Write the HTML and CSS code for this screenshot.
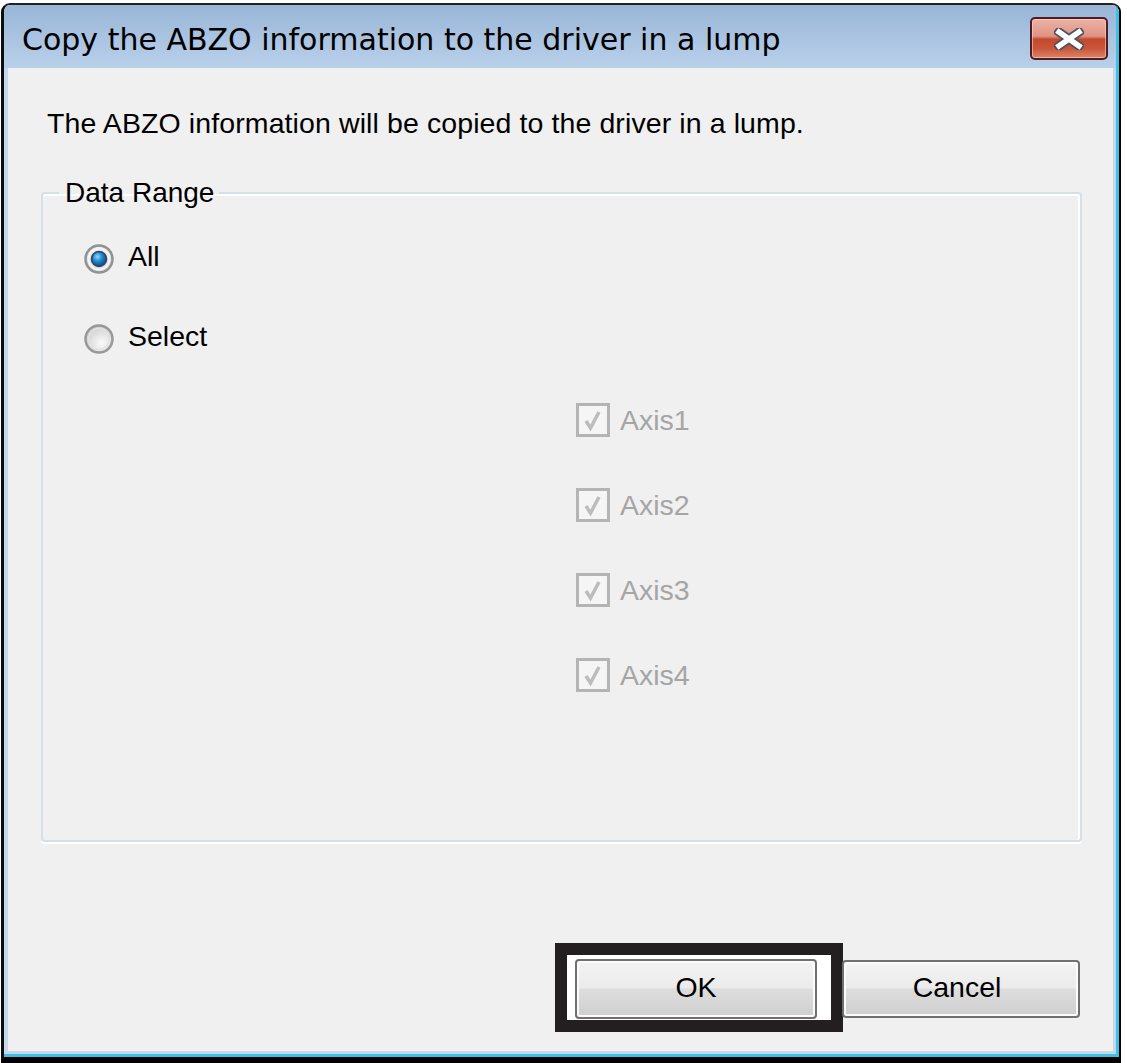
FILE: index.html
```html
<!DOCTYPE html>
<html lang="en">
<head>
<meta charset="utf-8">
<title>Copy the ABZO information to the driver in a lump</title>
<link rel="stylesheet" href="styles.css">
</head>
<body>
<div class="window">
  <div class="frame">
    <div class="titlebar">
      <div class="title">Copy the ABZO information to the driver in a lump</div>
      <button class="close" aria-label="Close">
        <svg viewBox="0 0 30 22" width="30" height="22" aria-hidden="true">
          <path d="M5 4 L25 18 M25 4 L5 18" stroke="#4a5264" stroke-width="9" stroke-linecap="square" fill="none"/>
          <path d="M5 4 L25 18 M25 4 L5 18" stroke="#ffffff" stroke-width="5.5" stroke-linecap="square" fill="none"/>
        </svg>
      </button>
    </div>
    <div class="client">
      <p class="message">The ABZO information will be copied to the driver in a lump.</p>
      <fieldset class="group">
        <legend class="group-title">Data Range</legend>
        <div class="radio-row first">
          <span class="radio">
            <svg viewBox="0 0 30 30" width="30" height="30" aria-hidden="true">
              <defs>
                <radialGradient id="rg1" cx="50%" cy="40%" r="60%"><stop offset="0" stop-color="#ffffff"/><stop offset="1" stop-color="#d2d2d2"/></radialGradient>
                <radialGradient id="dot" cx="40%" cy="35%" r="65%"><stop offset="0" stop-color="#8fd8ff"/><stop offset="0.45" stop-color="#2a8ad0"/><stop offset="1" stop-color="#0a4a80"/></radialGradient>
              </defs>
              <circle cx="15" cy="15" r="13.5" fill="url(#rg1)" stroke="#929292" stroke-width="2.5"/>
              <circle cx="15" cy="15" r="10.5" fill="none" stroke="#f4f4f4" stroke-width="2"/>
              <circle cx="15" cy="15" r="7.5" fill="url(#dot)" stroke="#27496d" stroke-width="1.6"/>
            </svg>
          </span>
          <span class="label">All</span>
        </div>
        <div class="radio-row second">
          <span class="radio">
            <svg viewBox="0 0 30 30" width="30" height="30" aria-hidden="true">
              <defs>
                <radialGradient id="rg2" cx="60%" cy="65%" r="65%"><stop offset="0" stop-color="#fbfbfb"/><stop offset="1" stop-color="#cfcfcf"/></radialGradient>
              </defs>
              <circle cx="15" cy="15" r="13.5" fill="url(#rg2)" stroke="#989898" stroke-width="2.5"/>
              <circle cx="15" cy="15" r="10.5" fill="none" stroke="#e2e2e2" stroke-width="1.5"/>
            </svg>
          </span>
          <span class="label">Select</span>
        </div>
        <div class="axes">
          <div class="check-row">
            <span class="check"><svg viewBox="0 0 34 34" width="34" height="34" aria-hidden="true"><rect x="1.5" y="1.5" width="31" height="31" fill="#f5f5f5" stroke="#b4b4b4" stroke-width="3"/><path d="M10 18 L14.5 25 L23 9" fill="none" stroke="#bcbcbc" stroke-width="3.5"/></svg></span>
            <span class="axis-label">Axis1</span>
          </div>
          <div class="check-row">
            <span class="check"><svg viewBox="0 0 34 34" width="34" height="34" aria-hidden="true"><rect x="1.5" y="1.5" width="31" height="31" fill="#f5f5f5" stroke="#b4b4b4" stroke-width="3"/><path d="M10 18 L14.5 25 L23 9" fill="none" stroke="#bcbcbc" stroke-width="3.5"/></svg></span>
            <span class="axis-label">Axis2</span>
          </div>
          <div class="check-row">
            <span class="check"><svg viewBox="0 0 34 34" width="34" height="34" aria-hidden="true"><rect x="1.5" y="1.5" width="31" height="31" fill="#f5f5f5" stroke="#b4b4b4" stroke-width="3"/><path d="M10 18 L14.5 25 L23 9" fill="none" stroke="#bcbcbc" stroke-width="3.5"/></svg></span>
            <span class="axis-label">Axis3</span>
          </div>
          <div class="check-row">
            <span class="check"><svg viewBox="0 0 34 34" width="34" height="34" aria-hidden="true"><rect x="1.5" y="1.5" width="31" height="31" fill="#f5f5f5" stroke="#b4b4b4" stroke-width="3"/><path d="M10 18 L14.5 25 L23 9" fill="none" stroke="#bcbcbc" stroke-width="3.5"/></svg></span>
            <span class="axis-label">Axis4</span>
          </div>
        </div>
      </fieldset>
      <div class="buttons">
        <div class="highlight">
          <button class="btn ok">OK</button>
        </div>
        <button class="btn cancel">Cancel</button>
      </div>
    </div>
  </div>
</div>
</body>
</html>
```
FILE: styles.css
```css
* { box-sizing: border-box; }

html, body {
  margin: 0;
  padding: 0;
  background: #ffffff;
}

body {
  font-family: "Liberation Sans", Arial, sans-serif;
  color: #000;
}

.window {
  margin: 3px 0 0 1px;
  width: 1120px;
  height: 1060px;
  border-left: 3px solid #0d0d0d;
  border-top: 2px solid #222222;
  border-right: 2px solid #000;
  border-bottom: 6px solid #000;
  border-top-left-radius: 9px;
  border-top-right-radius: 9px;
  overflow: hidden;
}

.frame {
  height: 100%;
  display: flex;
  flex-direction: column;
  border-right: 3px solid #3cc0e4;
  border-bottom: 3px solid #3cc0e4;
  background: linear-gradient(to bottom, #99b6d7 0px, #b9d0ea 63px, #c3d8ee 64px, #c3d8ee 100%);
}

.titlebar {
  height: 63px;
  flex: none;
  display: flex;
  align-items: flex-start;
  justify-content: space-between;
  padding: 0 8px 0 18px;
}

.title {
  margin-top: 17px;
  font-family: "DejaVu Sans", sans-serif;
  font-size: 30px;
  line-height: 36px;
  color: #000;
  white-space: nowrap;
}

.close {
  margin: 12px 0 0 0;
  width: 78px;
  height: 43px;
  padding: 0;
  border: 2px solid #4d1c25;
  border-radius: 5px;
  background: linear-gradient(to bottom, #ecb2a4 0%, #df9384 44%, #c4482c 52%, #c9553a 75%, #dc8466 100%);
  box-shadow: inset 0 0 0 1px rgba(255, 220, 210, 0.55);
  display: flex;
  align-items: center;
  justify-content: center;
}

.close svg { display: block; margin-top: 1px; }

.client {
  flex: 1;
  margin: 0 3px 3px 4px;
  background: #f0f0f0;
  display: flex;
  flex-direction: column;
}

.message {
  margin: 0;
  padding: 38px 0 0 39px;
  font-size: 28.5px;
  line-height: 34px;
  letter-spacing: 0.1px;
  white-space: nowrap;
}

.group {
  margin: 36px 31px 0 33px;
  padding: 0 0 145px 0;
  border: 2px solid #d5dfe5;
  border-radius: 4px;
  box-shadow: inset 0 2px 0 #ffffff, inset -2px 0 0 #ffffff, 0 2px 0 #ffffff;
  min-width: 0;
}

.group-title {
  margin-left: 16px;
  padding: 0 5px 0 6px;
  font-size: 28px;
  line-height: 34px;
}

.radio-row {
  height: 40px;
  display: flex;
  align-items: center;
  padding-left: 41px;
}

.radio-row.first { margin-top: 29px; }
.radio-row.second { margin-top: 40px; }

.radio {
  width: 30px;
  height: 30px;
  flex: none;
}

.radio svg, .check svg { display: block; }

.label {
  margin-left: 14px;
  margin-bottom: 6px;
  font-size: 28.5px;
  line-height: 34px;
}

.axes {
  margin-top: 41px;
  padding-left: 533px;
  display: flex;
  flex-direction: column;
  gap: 45px;
}

.check-row {
  height: 40px;
  display: flex;
  align-items: center;
}

.check {
  width: 34px;
  height: 34px;
  flex: none;
}

.axis-label {
  margin-left: 10px;
  font-size: 28.5px;
  line-height: 34px;
  color: #a5a5a5;
}

.buttons {
  margin-top: 101px;
  display: flex;
  justify-content: flex-end;
  align-items: flex-start;
  padding-right: 33px;
}

.highlight {
  width: 288px;
  height: 89px;
  border: 12px solid #231f20;
  background: #ffffff;
  padding: 4px 14px 1px 8px;
}

.btn {
  font-family: "Liberation Sans", Arial, sans-serif;
  font-size: 28.5px;
  color: #000;
  border: 2px solid #707070;
  border-radius: 4px;
  background: linear-gradient(to bottom, #f3f3f3 0%, #ebebeb 48%, #dddddd 50%, #cfcfcf 100%);
  box-shadow: inset 0 0 0 2px #fbfbfb;
  padding: 0 0 4px 0;
  display: flex;
  align-items: center;
  justify-content: center;
  line-height: 34px;
}

.ok {
  width: 242px;
  height: 60px;
}

.cancel {
  width: 238px;
  height: 58px;
  margin-top: 17px;
  margin-left: -1px;
  padding-right: 8px;
}
```
